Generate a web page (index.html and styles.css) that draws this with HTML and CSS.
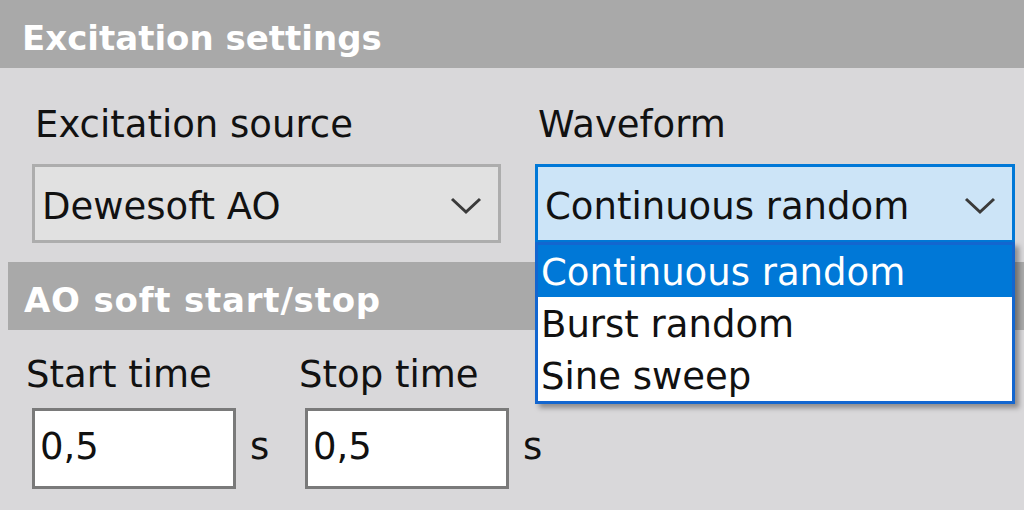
FILE: index.html
```html
<!DOCTYPE html>
<html lang="en">
<head>
<meta charset="utf-8">
<title>Excitation settings</title>
<link rel="stylesheet" href="styles.css">
</head>
<body>
<div class="panel">
  <div class="section-head head-main">Excitation settings</div>
  <div class="source-grid">
    <div class="field">
      <div class="label">Excitation source</div>
      <div class="combo">
        <span class="combo-text">Dewesoft AO</span>
        <svg class="chev" width="32" height="18" viewBox="0 0 32 18"><path d="M2 2 L16 15 L30 2" fill="none" stroke="#3a3a3a" stroke-width="3"/></svg>
      </div>
    </div>
    <div class="field field-wave">
      <div class="label">Waveform</div>
      <div class="combo combo-active">
        <span class="combo-text">Continuous random</span>
        <svg class="chev" width="32" height="18" viewBox="0 0 32 18"><path d="M2 2 L16 15 L30 2" fill="none" stroke="#3a3a3a" stroke-width="3"/></svg>
      </div>
      <ul class="dropdown">
        <li class="item selected">Continuous random</li>
        <li class="item">Burst random</li>
        <li class="item">Sine sweep</li>
      </ul>
    </div>
  </div>
  <div class="section-head head-sub">AO soft start/stop</div>
  <div class="time-grid">
    <div class="field">
      <div class="label">Start time</div>
      <div class="input-row">
        <div class="input">0,5</div>
        <span class="unit">s</span>
      </div>
    </div>
    <div class="field">
      <div class="label">Stop time</div>
      <div class="input-row">
        <div class="input">0,5</div>
        <span class="unit">s</span>
      </div>
    </div>
  </div>
</div>
</body>
</html>
```

FILE: styles.css
```css
html, body {
  margin: 0;
  padding: 0;
}
body {
  width: 1024px;
  height: 510px;
  overflow: hidden;
  background: #d9d8da;
  font-family: "DejaVu Sans", Verdana, sans-serif;
  font-size: 37px;
  color: #111;
}
.panel {
  position: relative;
}
.section-head {
  background: #a9a9a9;
  color: #fff;
  font-weight: bold;
  font-size: 34px;
  height: 68px;
  box-sizing: border-box;
  padding-top: 8px;
  line-height: 60px;
  white-space: nowrap;
}
.head-main {
  padding-left: 22px;
}
.head-sub {
  margin-left: 8px;
  margin-top: 19px;
  padding-left: 16px;
  letter-spacing: 0.8px;
}
.source-grid {
  display: grid;
  grid-template-columns: 469px 480px;
  column-gap: 34px;
  padding: 35px 0 0 32px;
}
.field {
  display: flex;
  flex-direction: column;
}
.field-wave {
  position: relative;
}
.label {
  line-height: 44px;
  height: 44px;
  padding-left: 3px;
  white-space: nowrap;
}
.combo {
  margin-top: 17px;
  height: 79px;
  box-sizing: border-box;
  border: 3px solid #adadad;
  background: #e1e1e1;
  padding: 18px 0 0 7px;
  display: flex;
  justify-content: space-between;
  align-items: flex-start;
}
.combo-text {
  line-height: 44px;
  white-space: nowrap;
}
.chev {
  margin-top: 12px;
  margin-right: 16px;
  flex: none;
}
.combo-active {
  border-color: #0078d7;
  background: #cce4f7;
}
.dropdown {
  position: absolute;
  left: 0;
  top: 139px;
  width: 480px;
  box-sizing: border-box;
  margin: 0;
  padding: 0;
  list-style: none;
  background: #fff;
  border: 3px solid #1366cf;
  box-shadow: 4px 4px 5px rgba(0, 0, 0, 0.35);
  z-index: 2;
}
.item {
  height: 52px;
  box-sizing: border-box;
  padding: 6px 0 0 3px;
  line-height: 44px;
  white-space: nowrap;
}
.item.selected {
  background: #0078d7;
  color: #fff;
}
.time-grid {
  display: grid;
  grid-template-columns: 273px auto;
  padding: 23px 0 0 26px;
}
.time-grid .label {
  padding-left: 0;
}
.input-row {
  margin-top: 11px;
  display: flex;
  align-items: baseline;
}
.input {
  margin-left: 6px;
  width: 204px;
  height: 81px;
  box-sizing: border-box;
  border: 3px solid #7a7a7a;
  background: #fff;
  padding: 14px 0 0 5px;
  line-height: 44px;
}
.unit {
  margin-left: 14px;
  line-height: 44px;
}
```
